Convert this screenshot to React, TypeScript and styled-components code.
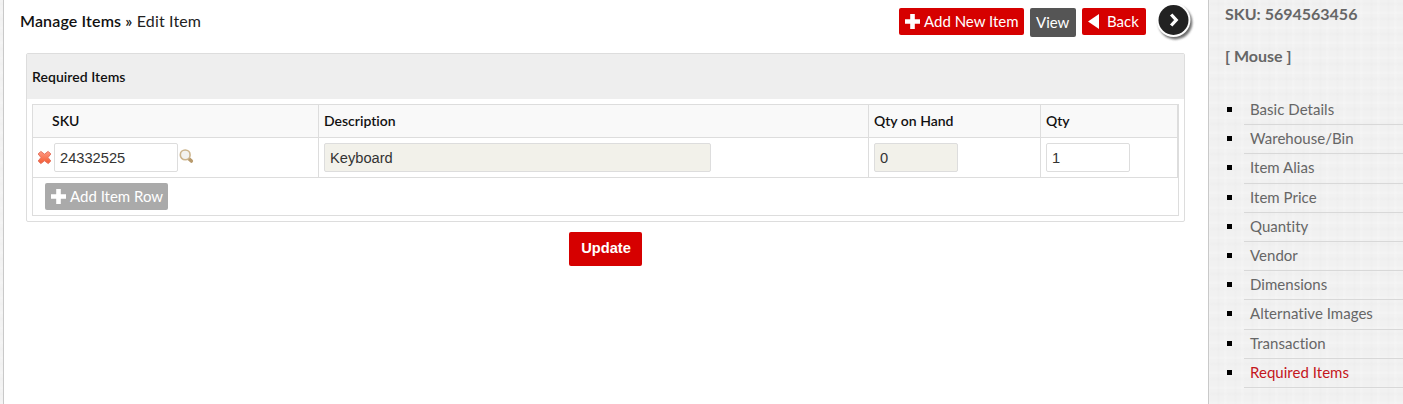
import React from 'react';
import styled, { createGlobalStyle } from 'styled-components';

const Global = createGlobalStyle`
  * { box-sizing: border-box; }
  body { margin: 0; background: #fff; font-family: Lato, 'Liberation Sans', sans-serif; font-variant-ligatures: none; overflow: hidden; }
`;

const linen = `
  repeating-linear-gradient(90deg, rgba(255,255,255,.14) 0 2px, transparent 4px 9px, rgba(0,0,0,.006) 11px 12px, transparent 14px 17px),
  repeating-linear-gradient(0deg, rgba(255,255,255,.14) 0 2px, transparent 3px 8px, rgba(0,0,0,.006) 9px 11px, transparent 12px 15px),
  #f1f1f1`;

const Page = styled.div`
  display: grid;
  grid-template-columns: 1205px 1fr;
  height: 404px;
  padding-left: 3px;
  background: ${linen};
`;
const Main = styled.main`
  background: #fff;
  border-left: 1px solid #c9c9c9;
  display: flex;
  flex-direction: column;
`;
const TopBar = styled.header`
  display: flex;
  justify-content: space-between;
  align-items: flex-start;
  height: 53px;
  padding: 0 12px 0 16px;
`;
const Title = styled.h1`
  margin: 11px 0 0;
  font-size: 16px;
  line-height: 20px;
  font-weight: 400;
  letter-spacing: 0.14px;
  color: #222;
  b { font-weight: 600; color: #111; }
`;
const Actions = styled.div`
  display: flex;
  align-items: flex-start;
`;
const Button = styled.button<{ $bg: string; $w: number; $h?: number; $gap?: number }>`
  display: flex;
  align-items: center;
  gap: ${p => p.$gap ?? 4}px;
  width: ${p => p.$w}px;
  height: ${p => p.$h ?? 27}px;
  padding: 0 0 1px 6px;
  margin: 8px 6px 0 0;
  border: 0;
  border-radius: 2px;
  background: ${p => p.$bg};
  color: #fff;
  font: 400 15px Lato, sans-serif;
  white-space: nowrap;
  svg { flex: none; }
`;
const NextButton = styled.button`
  width: 40px;
  height: 42px;
  padding: 0;
  margin: 2px 0 0 4px;
  border: 0;
  background: none;
  svg { display: block; }
`;
const Panel = styled.section`
  width: 1159px;
  height: 169px;
  margin-left: 22px;
  border: 1px solid #ddd;
  border-radius: 2px;
`;
const PanelHead = styled.h2`
  margin: 0;
  height: 45px;
  padding: 0 0 0 5px;
  background: #eee;
  color: #111;
  font-size: 14px;
  font-weight: 600;
  line-height: 45px;
  letter-spacing: 0.04px;
`;
const Table = styled.div`
  width: 1147px;
  height: 112px;
  margin: 5px 0 0 5px;
  border: 1px solid #ddd;
`;
const Row = styled.div<{ $h: number; $head?: boolean }>`
  display: grid;
  grid-template-columns: 286px 550px 172px 137px;
  height: ${p => p.$h}px;
  border-bottom: 1px solid #ddd;
  background: ${p => (p.$head ? '#f9f9f9' : '#fff')};
`;
const Cell = styled.div<{ $pad?: number }>`
  display: flex;
  align-items: center;
  padding-left: ${p => p.$pad ?? 5}px;
  border-right: 1px solid #ddd;
`;
const HeadCell = styled(Cell)`
  padding-bottom: 2px;
  color: #111;
  font-size: 14px;
  font-weight: 600;
`;
const SkuCell = styled(Cell)`
  svg:first-child { margin: 0 2px 1px 0; }
  svg:last-child { margin: 0 0 3px 1px; }
`;
const Input = styled.input<{ $w: number }>`
  width: ${p => p.$w}px;
  height: 29px;
  padding: 0 5px;
  border: 1px solid #ddd;
  border-radius: 2px;
  background: #fff;
  color: #333;
  font: 400 14.67px 'Liberation Sans', Arial, sans-serif;
  &:read-only { background: #f2f1ea; }
`;
const FootRow = styled.div`
  display: flex;
  padding-left: 12px;
  ${Button} { margin: 5px 0 0; }
`;
const Update = styled.button`
  align-self: flex-start;
  width: 73px;
  height: 34px;
  margin: 10px 0 0 565px;
  padding: 0 0 3px 1px;
  border: 0;
  border-radius: 2px;
  background: #d60000;
  color: #fff;
  font: 700 14.67px 'Liberation Sans', Arial, sans-serif;
`;
const Side = styled.aside`
  border-left: 1px solid #c9c9c9;
  padding: 4px 0 0 16px;
  color: #666;
`;
const SideTitle = styled.div`
  height: 42px;
  font-size: 16px;
  line-height: 20px;
  font-weight: 700;
`;
const Menu = styled.ul`
  list-style: none;
  margin: 8px 0 0;
  padding: 0 0 0 2px;
`;
const MenuItem = styled.li<{ $active?: boolean }>`
  display: flex;
  align-items: center;
  height: 29.2px;
  font-size: 15px;
  color: ${p => (p.$active ? '#c4161c' : '#666')};
  &::before {
    content: '';
    flex: none;
    width: 5px;
    height: 5px;
    margin: 0 12px 2px 0;
    background: #000;
  }
`;
const MenuLabel = styled.span`
  flex: 1;
  height: 100%;
  padding-left: 6px;
  line-height: 27px;
  letter-spacing: 0.03px;
  border-bottom: 1px solid #d8d8d8;
`;

const Plus = () => (
  <svg width="15" height="15" viewBox="0 0 15 15"><path d="M5.2 0h4.6v5.2H15v4.6H9.8V15H5.2V9.8H0V5.2h5.2z" fill="#fff" /></svg>
);
const LeftTriangle = () => (
  <svg width="11" height="15" viewBox="0 0 11 15"><path d="M11 0v15L0 7.5z" fill="#fff" /></svg>
);
const NextIcon = () => (
  <svg width="40" height="42" viewBox="0 0 40 42">
    <defs>
      <filter id="shade" x="-20%" y="-20%" width="150%" height="150%"><feGaussianBlur stdDeviation="1.2" /></filter>
    </defs>
    <circle cx="19.3" cy="20.4" r="17" fill="#555" opacity=".85" filter="url(#shade)" />
    <circle cx="17.5" cy="18" r="17" fill="#fff" />
    <circle cx="17.5" cy="18" r="15" fill="#222" />
    <path d="M15.2 12.5l5 5.5-5 5.5" fill="none" stroke="#fff" strokeWidth="3.3" />
  </svg>
);
const DeleteIcon = () => (
  <svg width="15" height="15" viewBox="0 0 15 15">
    <defs>
      <linearGradient id="del" x1="0" y1="0" x2="0" y2="1"><stop offset="0" stopColor="#ff9a84" /><stop offset="1" stopColor="#f45a30" /></linearGradient>
    </defs>
    <path d="M3.8 1.4L7.5 4.2l3.7-2.8 2.6 2.6-2.8 3.5 2.8 3.5-2.6 2.6-3.7-2.8-3.7 2.8-2.6-2.6 2.8-3.5L1.2 4z" fill="url(#del)" stroke="#e5705c" strokeWidth="1" strokeLinejoin="round" />
  </svg>
);
const SearchIcon = () => (
  <svg width="15" height="15" viewBox="0 0 15 15">
    <path d="M9.9 9.7l2.5 2.4" stroke="#b89a6c" strokeWidth="3.4" strokeLinecap="round" />
    <circle cx="6.2" cy="5.9" r="4.9" fill="#f3f2ee" stroke="#ccb48c" strokeWidth="1.6" />
  </svg>
);

const links = ['Basic Details', 'Warehouse/Bin', 'Item Alias', 'Item Price', 'Quantity', 'Vendor', 'Dimensions', 'Alternative Images', 'Transaction', 'Required Items'];

export default function App() {
  return (
    <Page>
      <Global />
      <Main>
        <TopBar>
          <Title><b>Manage Items »</b> Edit Item</Title>
          <Actions>
            <Button $bg="#d60000" $w={125}><Plus />Add New Item</Button>
            <Button $bg="#555" $w={46} $h={29}>View</Button>
            <Button $bg="#d60000" $w={64} $gap={8}><LeftTriangle />Back</Button>
            <NextButton aria-label="Next"><NextIcon /></NextButton>
          </Actions>
        </TopBar>
        <Panel>
          <PanelHead>Required Items</PanelHead>
          <Table>
            <Row $h={33} $head>
              <HeadCell $pad={19}>SKU</HeadCell>
              <HeadCell>Description</HeadCell>
              <HeadCell>Qty on Hand</HeadCell>
              <HeadCell>Qty</HeadCell>
            </Row>
            <Row $h={40}>
              <SkuCell $pad={4}>
                <DeleteIcon />
                <Input $w={124} defaultValue="24332525" />
                <SearchIcon />
              </SkuCell>
              <Cell><Input $w={387} readOnly value="Keyboard" /></Cell>
              <Cell><Input $w={84} readOnly value="0" /></Cell>
              <Cell><Input $w={84} defaultValue="1" /></Cell>
            </Row>
            <FootRow><Button $bg="#aaa" $w={123}><Plus />Add Item Row</Button></FootRow>
          </Table>
        </Panel>
        <Update>Update</Update>
      </Main>
      <Side>
        <SideTitle>SKU: 5694563456</SideTitle>
        <SideTitle>[ Mouse ]</SideTitle>
        <Menu>
          {links.map(l => (
            <MenuItem key={l} $active={l === 'Required Items'}><MenuLabel>{l}</MenuLabel></MenuItem>
          ))}
        </Menu>
      </Side>
    </Page>
  );
}
